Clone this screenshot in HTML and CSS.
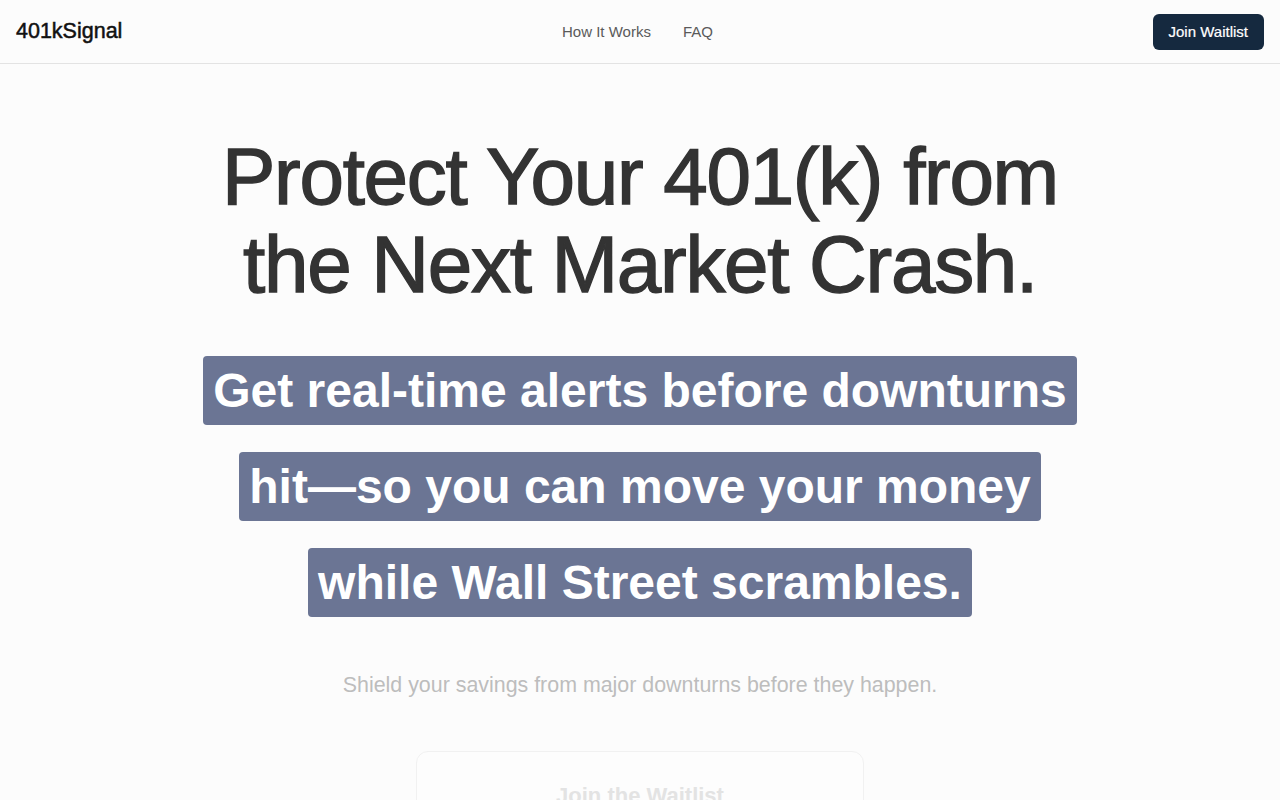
FILE: index.html
```html
<!DOCTYPE html>
<html lang="en">
<head>
<meta charset="utf-8">
<title>401kSignal</title>
<link rel="stylesheet" href="styles.css">
</head>
<body>
<header class="site-header">
  <a class="logo" href="#">401kSignal</a>
  <nav class="nav">
    <a href="#how">How It Works</a>
    <a href="#faq">FAQ</a>
  </nav>
  <a class="cta" href="#join">Join Waitlist</a>
</header>
<main class="hero">
  <h1 class="title">Protect Your 401(k) from the Next Market Crash.</h1>
  <p class="sub"><span class="hl">Get real-time alerts before downturns hit—so you can move your money while Wall Street scrambles.</span></p>
  <p class="lead">Shield your savings from major downturns before they happen.</p>
  <section class="card" id="join">
    <h2 class="card-title">Join the Waitlist</h2>
    <form class="form">
      <input class="input" type="email" placeholder="Enter your email">
      <button class="submit" type="button">Join Waitlist</button>
    </form>
  </section>
</main>
</body>
</html>
```
FILE: styles.css
```css
* { box-sizing: border-box; }
html, body { margin: 0; padding: 0; }
body {
  background: #fcfcfc;
  font-family: "Liberation Sans", Arial, sans-serif;
  color: #333;
  overflow: hidden;
}
a { text-decoration: none; }

.site-header {
  height: 64px;
  padding: 0 16px;
  display: flex;
  align-items: center;
  justify-content: space-between;
  border-bottom: 1px solid #e3e3e3;
  background: #fcfcfc;
}
.logo {
  font-size: 21.5px;
  color: #111;
  font-weight: 400;
  -webkit-text-stroke: 0.5px #111;
}
.nav {
  display: flex;
  gap: 32px;
}
.nav a {
  font-size: 15px;
  color: #5a5a5a;
}
.cta {
  background: #15293f;
  color: #fff;
  font-size: 15px;
  line-height: 20px;
  padding: 8px 16px;
  border-radius: 6px;
  -webkit-text-stroke: 0.2px #fff;
}

.hero {
  text-align: center;
  padding-top: 69px;
}
.title {
  max-width: 900px;
  margin: 0 auto;
  font-size: 80px;
  line-height: 88px;
  font-weight: 400;
  letter-spacing: -1.3px;
  color: #333;
  -webkit-text-stroke: 1.4px #333;
}
.sub {
  max-width: 900px;
  margin: 34px auto 0;
  font-size: 48px;
  line-height: 96px;
  font-weight: 700;
}
.hl {
  background: #6b7594;
  color: #fff;
  padding: 8px 10px;
  border-radius: 4px;
  -webkit-box-decoration-break: clone;
  box-decoration-break: clone;
}
.lead {
  margin: 40px 0 0;
  font-size: 21.4px;
  line-height: 28px;
  color: #bdbdbd;
}
.card {
  max-width: 448px;
  margin: 52px auto 0;
  padding: 28px 32px 32px;
  border: 1px solid #f1f1f1;
  border-radius: 12px;
  background: #fdfdfd;
}
.card-title {
  margin: 0;
  font-size: 22px;
  line-height: 32px;
  font-weight: 700;
  color: #e3e3e3;
}
.form {
  display: flex;
  flex-direction: column;
  gap: 12px;
  margin-top: 20px;
}
.input {
  height: 44px;
  border: 1px solid #f0f0f0;
  border-radius: 6px;
  padding: 0 12px;
  background: #fdfdfd;
}
.submit {
  height: 44px;
  border: 0;
  border-radius: 6px;
  background: #e8eaee;
  color: #fff;
}
```
